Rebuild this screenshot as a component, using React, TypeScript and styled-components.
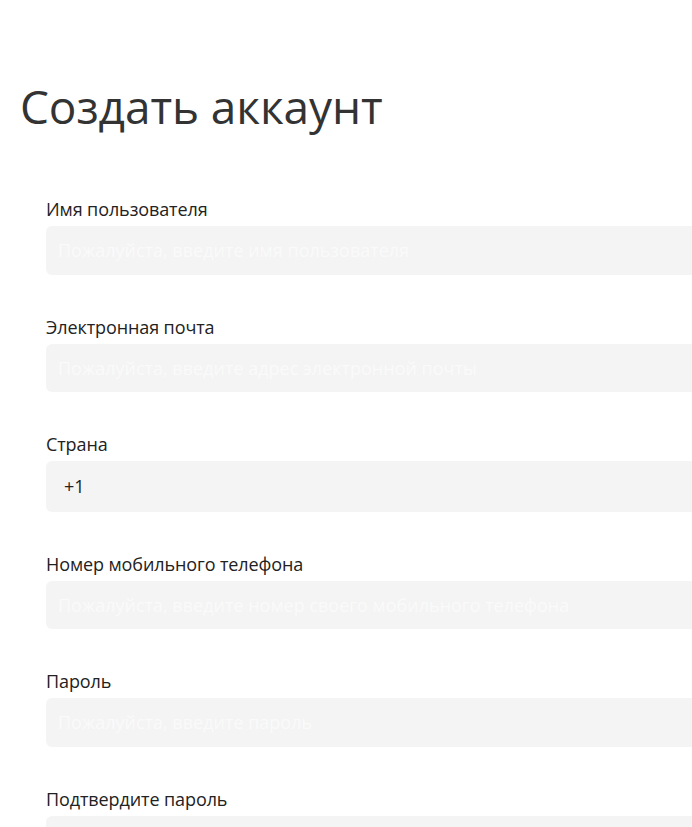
import React from "react";
import styled, { createGlobalStyle } from "styled-components";

const Global = createGlobalStyle`
  html, body { margin: 0; padding: 0; background: #ffffff; }
  body { font-family: "Open Sans", "Noto Sans", sans-serif; color: #222; overflow: hidden; }
`;

const Page = styled.div`
  width: 760px;
  padding: 76px 0 0 20px;
  box-sizing: border-box;
`;

const Title = styled.h1`
  margin: 0 0 61px 0;
  font-size: 46px;
  font-weight: 400;
  line-height: 60px;
  color: #333333;
  letter-spacing: -0.1px;
`;

const Form = styled.form`
  display: flex;
  flex-direction: column;
  gap: 40px;
  padding-left: 26px;
`;

const Field = styled.div`
  display: flex;
  flex-direction: column;
  gap: 5px;
`;

const Label = styled.label`
  font-size: 18px;
  line-height: 24px;
  color: #222222;
  letter-spacing: -0.1px;
`;

const Input = styled.input`
  box-sizing: border-box;
  width: 700px;
  height: 48.5px;
  border: none;
  outline: none;
  border-radius: 6px;
  background: #f4f4f4;
  padding: 0 12px;
  font-family: "Open Sans", "Noto Sans", sans-serif;
  font-size: 18px;
  color: #222;
  &::placeholder { color: #fafafa; opacity: 1; }
`;

const Select = styled.div`
  box-sizing: border-box;
  width: 700px;
  height: 50.5px;
  border-radius: 6px;
  background: #f4f4f4;
  padding: 0 18px;
  display: flex;
  align-items: center;
  font-size: 18px;
  color: #222;
`;

const fields = [
  { label: "Имя пользователя", placeholder: "Пожалуйста, введите имя пользователя" },
  { label: "Электронная почта", placeholder: "Пожалуйста, введите адрес электронной почты" },
];
const fields2 = [
  { label: "Номер мобильного телефона", placeholder: "Пожалуйста, введите номер своего мобильного телефона" },
  { label: "Пароль", placeholder: "Пожалуйста, введите пароль" },
  { label: "Подтвердите пароль", placeholder: "Пожалуйста, подтвердите пароль" },
];

export default function App() {
  return (
    <>
      <Global />
      <Page>
        <Title>Создать аккаунт</Title>
        <Form>
          {fields.map((f) => (
            <Field key={f.label}>
              <Label>{f.label}</Label>
              <Input placeholder={f.placeholder} />
            </Field>
          ))}
          <Field>
            <Label>Страна</Label>
            <Select>+1</Select>
          </Field>
          {fields2.map((f) => (
            <Field key={f.label}>
              <Label>{f.label}</Label>
              <Input placeholder={f.placeholder} type={f.label.startsWith("П") ? "password" : "text"} />
            </Field>
          ))}
        </Form>
      </Page>
    </>
  );
}
